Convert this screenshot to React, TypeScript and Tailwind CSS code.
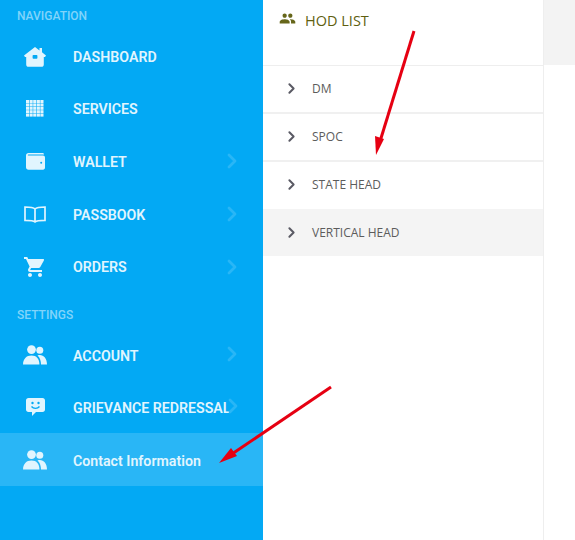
import { ChevronRight } from 'lucide-react'
import type { ReactNode } from 'react'
import { MdPeople, MdShoppingCart } from 'react-icons/md'

const IconHome = () => (
  <svg viewBox="0 0 22 20" className="h-5 w-[22px]" fill="currentColor">
    <path d="M11 0 15.5 3.4V1H18V5.3L22 8.4 21 10H19.8V17.5C19.8 18.9 18.9 19.8 17.5 19.8H4.5C3.1 19.8 2.2 18.9 2.2 17.5V10H1L0 8.4Z" />
    <rect x="8.6" y="8" width="4.8" height="3.8" rx="0.8" fill="#03a9f4" />
  </svg>
)

const IconGrid = () => (
  <svg viewBox="0 0 18 17" className="h-[17px] w-[18px]" fill="currentColor">
    {[0, 3.6, 7.2, 10.8, 14.4].map((x) =>
      [0, 3.4, 6.8, 10.2, 13.6].map((y) => <rect key={`${x}-${y}`} x={x} y={y} width="3.1" height="3" />),
    )}
  </svg>
)

const IconWallet = () => (
  <svg viewBox="0 0 19 17" className="h-[17px] w-[19px]" fill="currentColor">
    <path d="M2.5 0H16.5C17.4 0 18 .6 18 1.4H2.4C1.6 1.4 1.6 2.6 2.4 2.6H17C18.2 2.6 19 3.4 19 4.6V14.6C19 15.9 18.2 16.7 17 16.7H2.5C1 16.7 0 15.7 0 14.3V2.5C0 1 1 0 2.5 0Z" />
    <circle cx="15.2" cy="9.8" r="1" fill="#03a9f4" />
  </svg>
)

const IconBook = () => (
  <svg viewBox="0 0 22 17" className="h-[17px] w-[22px]" fill="none" stroke="currentColor" strokeWidth="1.7">
    <path d="M11 3C9.5 1.4 7.5 1 1 1V14.4C7 14.4 9.5 14.6 11 16 12.5 14.6 15 14.4 21 14.4V1C14.5 1 12.5 1.4 11 3ZM11 3V16" />
  </svg>
)

const IconSmile = () => (
  <svg viewBox="0 0 19 18" className="h-[18px] w-[19px]">
    <path fill="currentColor" d="M2.5 0H16.5C18 0 19 1 19 2.5V11.5C19 13 18 14 16.5 14H10L6 18V14H2.5C1 14 0 13 0 11.5V2.5C0 1 1 0 2.5 0Z" />
    <circle cx="6.5" cy="5" r="1.2" fill="#03a9f4" />
    <circle cx="12.5" cy="5" r="1.2" fill="#03a9f4" />
    <path d="M5.5 8.5C7.5 11 11.5 11 13.5 8.5" fill="none" stroke="#03a9f4" strokeWidth="1.3" />
  </svg>
)

const IconUsers = () => (
  <svg viewBox="0 0 24 20" className="h-5 w-6" fill="currentColor">
    <circle cx="8.5" cy="4.6" r="4.4" />
    <circle cx="16.8" cy="5.2" r="3.5" />
    <path d="M0 19.6C0 14 3.4 10.6 8.5 10.6S16.4 14 16.4 19.6Z" />
    <path d="M14.5 10.4C15.5 10 16 10 16.8 10 20.8 10 24 13.5 24 19.6H18C18 15.8 17 12.6 14.5 10.4Z" />
  </svg>
)

type NavItem = {
  label: string
  icon: ReactNode
  arrow?: boolean
  h: string
  active?: boolean
  chevronTight?: boolean
  lower?: boolean
}

const mainItems: NavItem[] = [
  { label: 'DASHBOARD', icon: <IconHome />, h: 'h-[52px]' },
  { label: 'SERVICES', icon: <IconGrid />, h: 'h-[52px]' },
  { label: 'WALLET', icon: <IconWallet />, arrow: true, h: 'h-[53px]' },
  { label: 'PASSBOOK', icon: <IconBook />, arrow: true, h: 'h-[53px]' },
  { label: 'ORDERS', icon: <MdShoppingCart className="h-[24px] w-[24px]" />, arrow: true, h: 'h-[52px]' },
]

const settingItems: NavItem[] = [
  { label: 'ACCOUNT', icon: <IconUsers />, arrow: true, h: 'h-[52px]', lower: true },
  { label: 'GRIEVANCE REDRESSAL', icon: <IconSmile />, arrow: true, h: 'h-[52px]', chevronTight: true, lower: true },
  { label: 'Contact Information', icon: <IconUsers />, h: 'h-[53px]', active: true, lower: true },
]

function NavRow({ item }: { item: NavItem }) {
  return (
    <div className={`flex items-center pl-[23px] ${item.h} ${item.active ? 'bg-[#29b6f6]' : ''}`}>
      <span
        className={`mr-[26px] flex w-[24px] shrink-0 items-center justify-center text-[#e1f5fe] ${item.lower ? '' : 'mb-[3px]'}`}
      >
        {item.icon}
      </span>
      <span className={`whitespace-nowrap text-[14.2px] font-semibold text-[#e1f5fe] ${item.lower ? 'pt-[4px]' : ''}`}>
        {item.label}
      </span>
      {item.arrow ? (
        <ChevronRight
          strokeWidth={2.8}
          className={`mb-[3px] h-[24px] w-[24px] text-[#29b6f6] ${item.chevronTight ? 'ml-[-10px]' : 'ml-auto mr-[19px]'}`}
        />
      ) : null}
    </div>
  )
}

const hodRows = [
  { label: 'DM', h: 'h-[48px]', bar: true },
  { label: 'SPOC', h: 'h-[48px]', bar: true },
  { label: 'STATE HEAD', h: 'h-[47px]', up: true },
  { label: 'VERTICAL HEAD', h: 'h-[47px]', active: true },
]

export default function App() {
  return (
    <div className="relative flex h-[540px] w-[575px] overflow-hidden bg-white font-['Roboto',sans-serif]">
      <aside className="w-[263px] shrink-0 bg-[#03a9f4]">
        <div className="flex h-[32px] items-center pb-px pl-[17px] text-[12px] font-medium text-[#81d4fa]">NAVIGATION</div>
        {mainItems.map((item) => (
          <NavRow key={item.label} item={item} />
        ))}
        <div className="flex h-[35px] items-center pl-[17px] pt-[7px] text-[12px] font-medium text-[#81d4fa]">SETTINGS</div>
        {settingItems.map((item) => (
          <NavRow key={item.label} item={item} />
        ))}
      </aside>

      <section className="w-[281px] shrink-0 border-r border-[#eeeeee] font-['Open_Sans',sans-serif]">
        <div className="flex h-[66px] items-start gap-[9px] border-b border-[#eeeeee] pl-[16px] pt-[11px] text-[#5f5f10]">
          <MdPeople className="mt-[-1px] h-[17px] w-[17px] text-[#66661a]" />
          <span className="text-[14.5px] leading-[19px]">HOD LIST</span>
        </div>
        {hodRows.map((row) => (
          <div
            key={row.label}
            className={`flex items-center pl-[20px] ${row.h} ${row.bar ? 'border-b-2 border-[#f0f0f0] pb-[1px]' : ''} ${row.up ? 'pb-[2px]' : ''} ${row.active ? 'bg-[#f4f4f4]' : ''}`}
          >
            <ChevronRight strokeWidth={2.8} className="h-[17px] w-[17px] text-[#5a5a64]" />
            <span className="ml-[12px] text-[12px] text-[#5c5c5c]">{row.label}</span>
          </div>
        ))}
      </section>

      <div className="h-[65px] flex-1 bg-[#f3f3f3]" />

      <svg className="pointer-events-none absolute left-0 top-0 h-[540px] w-[575px]" viewBox="0 0 575 540" fill="#e60012">
        <path d="M414 31 379.5 143" stroke="#e60012" strokeWidth="3" fill="none" />
        <path d="M376 155 375 136 384 139Z" />
        <path d="M331 387 229 456" stroke="#e60012" strokeWidth="3" fill="none" />
        <path d="M219 463 231 448 237 456Z" />
      </svg>
    </div>
  )
}
